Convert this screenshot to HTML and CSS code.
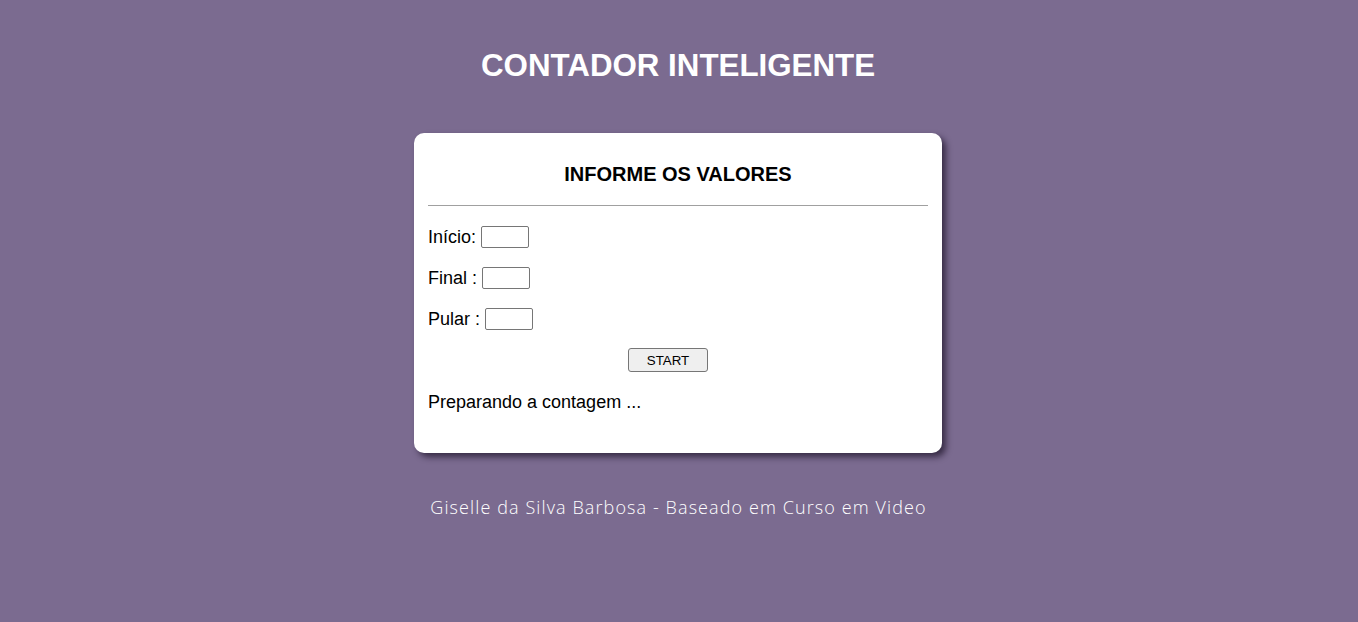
FILE: index.html
```html
<!DOCTYPE html>
<html lang="pt-BR">
<head>
<meta charset="utf-8">
<title>Contador Inteligente</title>
<link rel="stylesheet" href="styles.css">
</head>
<body>
<header class="top">
  <h1 class="title">CONTADOR INTELIGENTE</h1>
</header>
<main class="card">
  <h2 class="card-title">INFORME OS VALORES</h2>
  <hr class="divider">
  <div class="field"><label for="inicio">Início:</label><input id="inicio" class="num" type="text"></div>
  <div class="field"><label for="final">Final :</label><input id="final" class="num" type="text"></div>
  <div class="field"><label for="pular">Pular :</label><input id="pular" class="num" type="text"></div>
  <div class="actions"><button class="btn" type="button">START</button></div>
  <div class="result">Preparando a contagem ...</div>
</main>
<footer class="foot">Giselle da Silva Barbosa - Baseado em Curso em Video</footer>
</body>
</html>
```

FILE: styles.css
```css
html, body {
  margin: 0;
  padding: 0;
}
body {
  background: #7b6b90;
  font-family: "Liberation Sans", Arial, sans-serif;
  color: #000;
  display: flex;
  flex-direction: column;
  align-items: center;
  min-height: 622px;
}
.top {
  padding-top: 48px;
  margin-right: 2px;
}
.title {
  margin: 0;
  font-size: 31.3px;
  font-weight: bold;
  color: #fff;
  text-align: center;
  line-height: 36px;
}
.card {
  margin-top: 49px;
  margin-right: 2px;
  width: 500px;
  padding: 14px 14px 40px;
  background: #fff;
  border-radius: 10px;
  box-shadow: 4px 4px 6px rgba(20, 10, 30, 0.65);
}
.card-title {
  margin: 16px 0 0;
  font-size: 20px;
  line-height: 23px;
  font-weight: bold;
  text-align: center;
}
.divider {
  margin: 19px 0 0;
  border: 0;
  border-top: 1px solid #a0a0a0;
  height: 0;
}
.field {
  display: flex;
  align-items: center;
  gap: 5px;
  height: 22px;
  margin-top: 19px;
  font-size: 18px;
  line-height: 21px;
}
.field:first-of-type {
  margin-top: 20px;
}
.num {
  box-sizing: border-box;
  width: 48px;
  height: 22px;
  margin: 0;
  padding: 1px 2px;
  border: 1px solid #767676;
  border-radius: 2px;
  background: #fff;
  font: 13px "Liberation Sans", Arial, sans-serif;
}
.actions {
  margin-top: 18px;
  text-align: center;
  height: 24px;
}
.btn {
  box-sizing: border-box;
  width: 80px;
  height: 24px;
  margin: 0 20px 0 0;
  padding: 0;
  background: #efefef;
  border: 1px solid #767676;
  border-radius: 3px;
  font: 13.33px "Liberation Sans", Arial, sans-serif;
  color: #000;
}
.result {
  margin-top: 20px;
  font-size: 18px;
  line-height: 21px;
}
.foot {
  margin-top: 42px;
  margin-right: 1px;
  color: #fff;
  font-family: "Open Sans", "Liberation Sans", sans-serif;
  font-weight: 300;
  font-size: 18px;
  line-height: 24px;
  letter-spacing: 1.1px;
}
```
